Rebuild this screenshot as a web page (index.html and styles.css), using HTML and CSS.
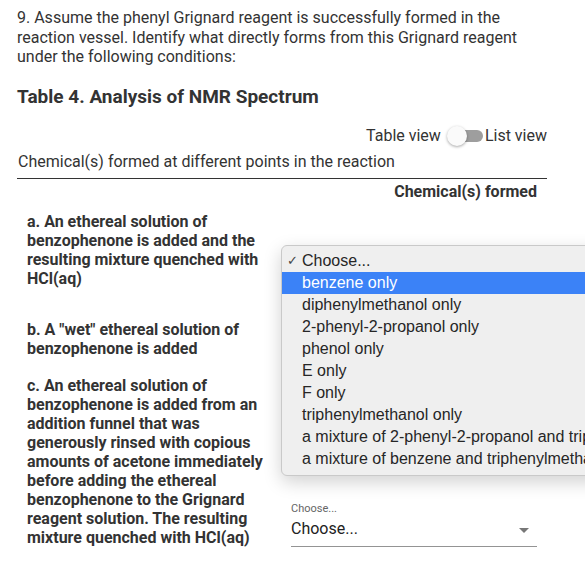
FILE: index.html
```html
<!DOCTYPE html>
<html lang="en">
<head>
    <meta charset="UTF-8">
    <meta name="viewport" content="width=device-width, initial-scale=1.0">
    <title>Question 9 - Grignard Reagent</title>
    <link rel="stylesheet" href="styles.css">
</head>
<body>
    <div class="page">
        <p class="question">9. Assume the phenyl Grignard reagent is successfully formed in the reaction vessel. Identify what directly forms from this Grignard reagent under the following conditions:</p>
        <h3 class="table-title">Table 4. Analysis of NMR Spectrum</h3>
        <div class="view-toggle">
            <span>Table view</span>
            <span class="switch"><span class="knob"></span></span>
            <span>List view</span>
        </div>
        <table class="nmr-table">
            <caption>Chemical(s) formed at different points in the reaction</caption>
            <thead>
                <tr><th></th><th>Chemical(s) formed</th></tr>
            </thead>
            <tbody>
                <tr>
                    <td class="condition">a. An ethereal solution of benzophenone is added and the resulting mixture quenched with HCl(aq)</td>
                    <td class="answer">
                        <div class="select focused">
                            <label>Choose...</label>
                            <div class="select-value">Choose...<span class="arrow"></span></div>
                            <ul class="menu">
                                <li class="checked">Choose...</li>
                                <li class="active">benzene only</li>
                                <li>diphenylmethanol only</li>
                                <li>2-phenyl-2-propanol only</li>
                                <li>phenol only</li>
                                <li>E only</li>
                                <li>F only</li>
                                <li>triphenylmethanol only</li>
                                <li>a mixture of 2-phenyl-2-propanol and triphenylmethanol</li>
                                <li>a mixture of benzene and triphenylmethanol</li>
                            </ul>
                        </div>
                    </td>
                </tr>
                <tr>
                    <td class="condition">b. A "wet" ethereal solution of benzophenone is added</td>
                    <td class="answer">
                        <div class="select">
                            <label>Choose...</label>
                            <div class="select-value">Choose...<span class="arrow"></span></div>
                        </div>
                    </td>
                </tr>
                <tr>
                    <td class="condition">c. An ethereal solution of benzophenone is added from an addition funnel that was generously rinsed with copious amounts of acetone immediately before adding the ethereal benzophenone to the Grignard reagent solution. The resulting mixture quenched with HCl(aq)</td>
                    <td class="answer">
                        <div class="select">
                            <label>Choose...</label>
                            <div class="select-value">Choose...<span class="arrow"></span></div>
                        </div>
                    </td>
                </tr>
            </tbody>
        </table>
    </div>
</body>
</html>
```

FILE: styles.css
```css
body {
    margin: 0;
    font-family: Roboto, sans-serif;
    color: #333;
    background: white;
    overflow: hidden;
}
.page {
    width: 530px;
    padding: 0 0 0 17px;
}
.question {
    font-size: 16px;
    line-height: 19.5px;
    margin: 8px 0 0;
}
.table-title {
    font-size: 19px;
    font-weight: 700;
    margin: 18px 0 0;
    line-height: 24px;
}
.view-toggle {
    display: flex;
    justify-content: flex-end;
    align-items: center;
    gap: 2px;
    font-size: 16px;
    margin-top: 17px;
    line-height: 20px;
}
.switch {
    position: relative;
    width: 36px;
    height: 20px;
    display: inline-flex;
    align-items: center;
    justify-content: flex-end;
    margin: 0 0 0 4px;
}
.switch::before {
    content: "";
    width: 29px;
    height: 12px;
    border-radius: 6px;
    background: #9e9e9e;
}
.knob {
    position: absolute;
    left: 0;
    top: 0;
    width: 20px;
    height: 20px;
    border-radius: 50%;
    background: #fafafa;
    box-shadow: 0 1px 3px rgba(0, 0, 0, 0.35);
}
.nmr-table {
    width: 100%;
    border-collapse: collapse;
}
.nmr-table caption {
    text-align: left;
    font-size: 16px;
    line-height: 20px;
    padding: 6px 0 6px 1px;
    border-bottom: 1px solid #333;
}
.nmr-table th {
    text-align: right;
    font-size: 16px;
    font-weight: 700;
    padding: 3px 10px 2px;
    line-height: 19px;
}
.nmr-table td {
    vertical-align: bottom;
    padding: 9px 10px;
}
.condition {
    width: 244px;
    font-size: 16px;
    font-weight: 700;
    line-height: 19px;
}
.select {
    position: relative;
    width: 246px;
    padding-top: 7px;
    border-bottom: 1px solid #949494;
    padding-bottom: 6px;
}
.select label {
    display: block;
    font-size: 11px;
    color: #666;
    line-height: 14px;
}
.select.focused label {
    color: #1976d2;
}
.select-value {
    font-size: 16px;
    color: #222;
    line-height: 22px;
    margin-top: 2px;
    display: flex;
    justify-content: space-between;
    align-items: center;
}
.arrow {
    width: 0;
    height: 0;
    border-left: 5px solid transparent;
    border-right: 5px solid transparent;
    border-top: 5px solid #777;
    margin: 4px 8px 0 0;
}
.menu {
    position: absolute;
    left: -10px;
    top: 9px;
    width: 330px;
    margin: 0;
    padding: 4px 0 5px;
    list-style: none;
    background: #efefef;
    border: 1px solid #c9c9c9;
    border-radius: 6px;
    box-shadow: 0 6px 18px rgba(0, 0, 0, 0.18);
    font-family: "Liberation Sans", Arial, sans-serif;
    font-size: 16px;
    color: #262626;
    white-space: nowrap;
    z-index: 10;
}
.menu li {
    line-height: 22px;
    padding-left: 20px;
    position: relative;
}
.menu li.checked::before {
    content: "\2713";
    position: absolute;
    left: 5px;
    font-size: 13px;
    color: #444;
}
.menu li.active {
    background: #3b82f7;
    color: white;
}
```
